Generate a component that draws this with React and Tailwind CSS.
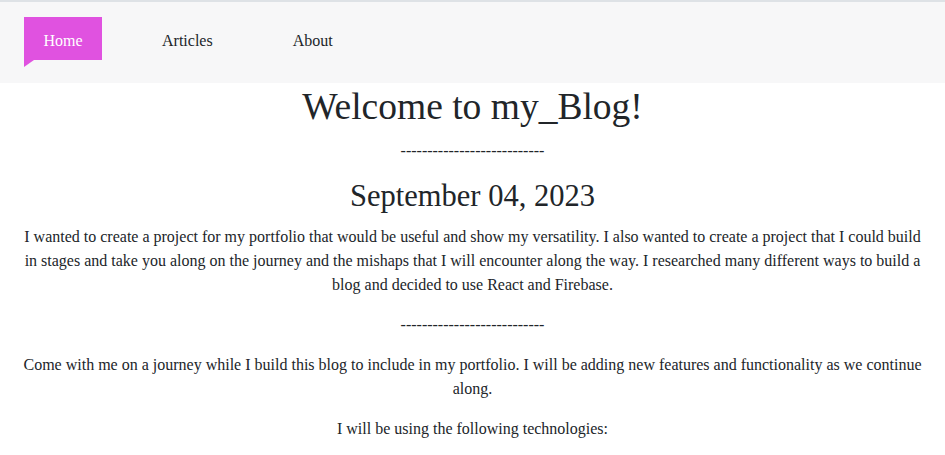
export default function App() {
  return (
    <div className="min-h-screen bg-white text-[#212529] font-['Liberation_Serif','Times_New_Roman',serif]">
      <nav className="h-[83px] border-t-2 border-[#dee2e6] bg-[#f7f7f8] flex items-start pt-[15px]">
        <div className="relative ml-6 w-[78px] h-[43px] pt-[5px] bg-[#e052e0] text-white text-[16px] flex items-center justify-center">
          Home
          <div className="absolute left-0 top-full w-0 h-0 border-t-[7px] border-t-[#e052e0] border-r-[10px] border-r-transparent" />
        </div>
        <div className="h-[43px] pt-[5px] flex items-center ml-[60px] text-[16px]">Articles</div>
        <div className="h-[43px] pt-[5px] flex items-center ml-[80px] text-[16px]">About</div>
      </nav>
      <main className="px-[22px] text-center">
        <h1 className="text-[37.5px] leading-[48px] mb-2">Welcome to my_Blog!</h1>
        <p className="text-[16px] leading-6 mb-4">---------------------------</p>
        <h2 className="text-[30.5px] leading-[38px] mb-2 relative -top-[2px]">September 04, 2023</h2>
        <p className="text-[16px] leading-6 mb-4">
          I wanted to create a project for my portfolio that would be useful and show my versatility. I also wanted to create a project that I could build in stages and take you along on the journey and the mishaps that I will encounter along the way. I researched many different ways to build a blog and decided to use React and Firebase.
        </p>
        <p className="text-[16px] leading-6 mb-4">---------------------------</p>
        <p className="text-[16px] leading-6 mb-4">
          Come with me on a journey while I build this blog to include in my portfolio. I will be adding new features and functionality as we continue along.
        </p>
        <p className="text-[16px] leading-6 mb-4">I will be using the following technologies:</p>
      </main>
    </div>
  );
}
